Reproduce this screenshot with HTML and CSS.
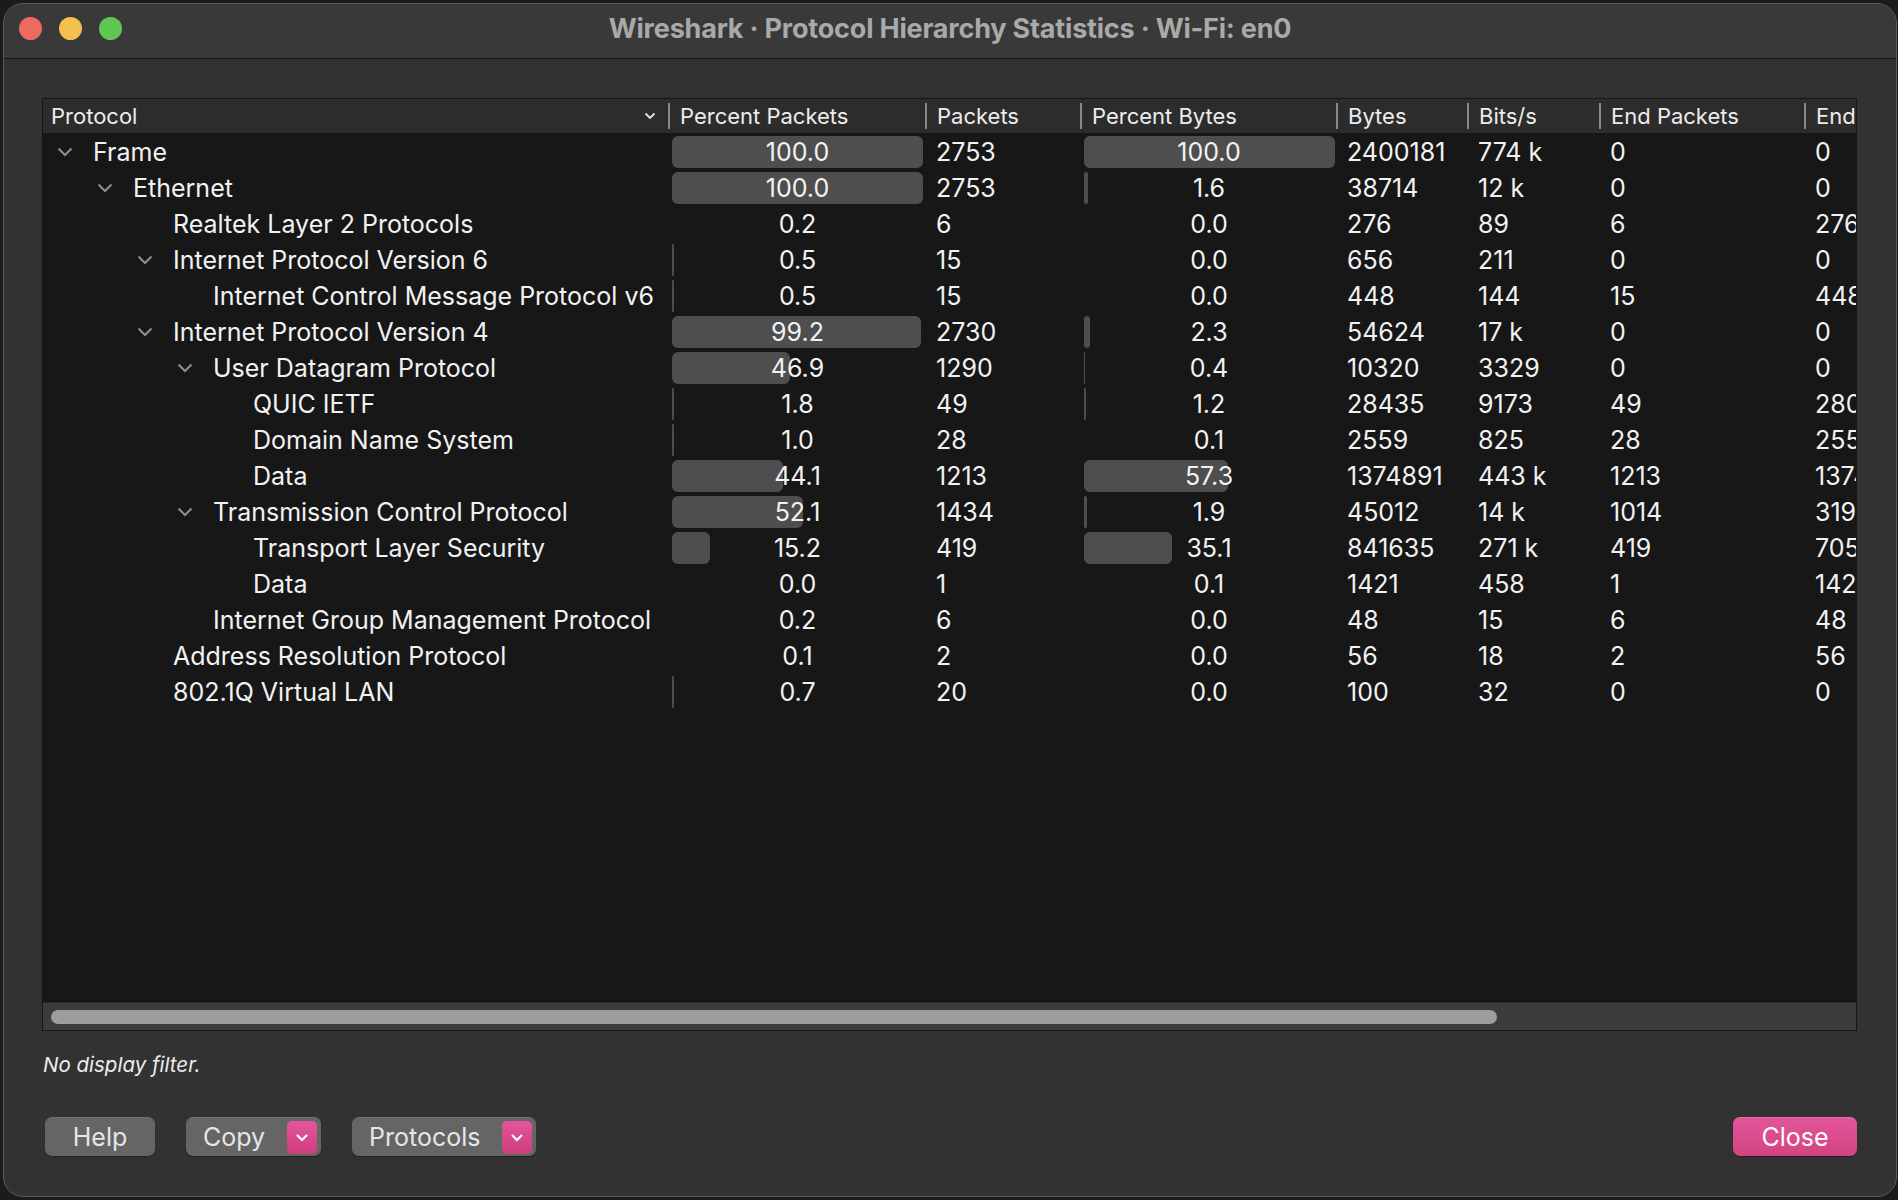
FILE: index.html
```html
<!DOCTYPE html>
<html>
<head>
<meta charset="utf-8">
<link rel="stylesheet" href="styles.css">
</head>
<body>
<div class="window">
  <div class="titlebar">
    <div class="lights">
      <span class="light red"></span>
      <span class="light yellow"></span>
      <span class="light green"></span>
    </div>
    <div class="title">Wireshark · Protocol Hierarchy Statistics · Wi-Fi: en0</div>
    <div></div>
  </div>
  <div class="content">
    <div class="table">
      <div class="clip">
        <div class="row head">
          <div class="hc first"><span>Protocol</span><svg class="sortchev" width="12" height="8" viewBox="0 0 12 8"><polyline points="1.5,1.5 6,6 10.5,1.5" fill="none" stroke="#e8e8e8" stroke-width="1.8"/></svg></div>
          <div class="hc">Percent Packets</div>
          <div class="hc">Packets</div>
          <div class="hc">Percent Bytes</div>
          <div class="hc">Bytes</div>
          <div class="hc">Bits/s</div>
          <div class="hc">End Packets</div>
          <div class="hc">End Bytes</div>
        </div>
        <div class="body">
          <div class="row"><div class="tree l0"><span class="tw"><svg width="16" height="10" viewBox="0 0 16 10"><polyline points="1.5,1.5 8,8 14.5,1.5" fill="none" stroke="#8e8e8e" stroke-width="2"/></svg></span>Frame</div><div class="pct"><i class="bar" style="width:251px"></i><span>100.0</span></div><div class="c">2753</div><div class="pct"><i class="bar" style="width:251px"></i><span>100.0</span></div><div class="c">2400181</div><div class="c">774 k</div><div class="c">0</div><div class="c">0</div></div>
          <div class="row"><div class="tree l1"><span class="tw"><svg width="16" height="10" viewBox="0 0 16 10"><polyline points="1.5,1.5 8,8 14.5,1.5" fill="none" stroke="#8e8e8e" stroke-width="2"/></svg></span>Ethernet</div><div class="pct"><i class="bar" style="width:251px"></i><span>100.0</span></div><div class="c">2753</div><div class="pct"><i class="bar" style="width:4px"></i><span>1.6</span></div><div class="c">38714</div><div class="c">12 k</div><div class="c">0</div><div class="c">0</div></div>
          <div class="row"><div class="tree l2"><span class="tw"></span>Realtek Layer 2 Protocols</div><div class="pct"><span>0.2</span></div><div class="c">6</div><div class="pct"><span>0.0</span></div><div class="c">276</div><div class="c">89</div><div class="c">6</div><div class="c">276</div></div>
          <div class="row"><div class="tree l2"><span class="tw"><svg width="16" height="10" viewBox="0 0 16 10"><polyline points="1.5,1.5 8,8 14.5,1.5" fill="none" stroke="#8e8e8e" stroke-width="2"/></svg></span>Internet Protocol Version 6</div><div class="pct"><i class="bar" style="width:1.5px"></i><span>0.5</span></div><div class="c">15</div><div class="pct"><span>0.0</span></div><div class="c">656</div><div class="c">211</div><div class="c">0</div><div class="c">0</div></div>
          <div class="row"><div class="tree l3"><span class="tw"></span>Internet Control Message Protocol v6</div><div class="pct"><i class="bar" style="width:1.5px"></i><span>0.5</span></div><div class="c">15</div><div class="pct"><span>0.0</span></div><div class="c">448</div><div class="c">144</div><div class="c">15</div><div class="c">448</div></div>
          <div class="row"><div class="tree l2"><span class="tw"><svg width="16" height="10" viewBox="0 0 16 10"><polyline points="1.5,1.5 8,8 14.5,1.5" fill="none" stroke="#8e8e8e" stroke-width="2"/></svg></span>Internet Protocol Version 4</div><div class="pct"><i class="bar" style="width:249px"></i><span>99.2</span></div><div class="c">2730</div><div class="pct"><i class="bar" style="width:6px"></i><span>2.3</span></div><div class="c">54624</div><div class="c">17 k</div><div class="c">0</div><div class="c">0</div></div>
          <div class="row"><div class="tree l3"><span class="tw"><svg width="16" height="10" viewBox="0 0 16 10"><polyline points="1.5,1.5 8,8 14.5,1.5" fill="none" stroke="#8e8e8e" stroke-width="2"/></svg></span>User Datagram Protocol</div><div class="pct"><i class="bar" style="width:118px"></i><span>46.9</span></div><div class="c">1290</div><div class="pct"><i class="bar" style="width:1.2px"></i><span>0.4</span></div><div class="c">10320</div><div class="c">3329</div><div class="c">0</div><div class="c">0</div></div>
          <div class="row"><div class="tree l4"><span class="tw"></span>QUIC IETF</div><div class="pct"><i class="bar" style="width:2px"></i><span>1.8</span></div><div class="c">49</div><div class="pct"><i class="bar" style="width:2px"></i><span>1.2</span></div><div class="c">28435</div><div class="c">9173</div><div class="c">49</div><div class="c">28035</div></div>
          <div class="row"><div class="tree l4"><span class="tw"></span>Domain Name System</div><div class="pct"><i class="bar" style="width:1.5px"></i><span>1.0</span></div><div class="c">28</div><div class="pct"><span>0.1</span></div><div class="c">2559</div><div class="c">825</div><div class="c">28</div><div class="c">2559</div></div>
          <div class="row"><div class="tree l4"><span class="tw"></span>Data</div><div class="pct"><i class="bar" style="width:111px"></i><span>44.1</span></div><div class="c">1213</div><div class="pct"><i class="bar" style="width:144px"></i><span>57.3</span></div><div class="c">1374891</div><div class="c">443 k</div><div class="c">1213</div><div class="c">1374891</div></div>
          <div class="row"><div class="tree l3"><span class="tw"><svg width="16" height="10" viewBox="0 0 16 10"><polyline points="1.5,1.5 8,8 14.5,1.5" fill="none" stroke="#8e8e8e" stroke-width="2"/></svg></span>Transmission Control Protocol</div><div class="pct"><i class="bar" style="width:131px"></i><span>52.1</span></div><div class="c">1434</div><div class="pct"><i class="bar" style="width:2.5px"></i><span>1.9</span></div><div class="c">45012</div><div class="c">14 k</div><div class="c">1014</div><div class="c">31942</div></div>
          <div class="row"><div class="tree l4"><span class="tw"></span>Transport Layer Security</div><div class="pct"><i class="bar" style="width:38px"></i><span>15.2</span></div><div class="c">419</div><div class="pct"><i class="bar" style="width:88px"></i><span>35.1</span></div><div class="c">841635</div><div class="c">271 k</div><div class="c">419</div><div class="c">705217</div></div>
          <div class="row"><div class="tree l4"><span class="tw"></span>Data</div><div class="pct"><span>0.0</span></div><div class="c">1</div><div class="pct"><span>0.1</span></div><div class="c">1421</div><div class="c">458</div><div class="c">1</div><div class="c">1421</div></div>
          <div class="row"><div class="tree l3"><span class="tw"></span>Internet Group Management Protocol</div><div class="pct"><span>0.2</span></div><div class="c">6</div><div class="pct"><span>0.0</span></div><div class="c">48</div><div class="c">15</div><div class="c">6</div><div class="c">48</div></div>
          <div class="row"><div class="tree l2"><span class="tw"></span>Address Resolution Protocol</div><div class="pct"><span>0.1</span></div><div class="c">2</div><div class="pct"><span>0.0</span></div><div class="c">56</div><div class="c">18</div><div class="c">2</div><div class="c">56</div></div>
          <div class="row"><div class="tree l2"><span class="tw"></span>802.1Q Virtual LAN</div><div class="pct"><i class="bar" style="width:1.5px"></i><span>0.7</span></div><div class="c">20</div><div class="pct"><span>0.0</span></div><div class="c">100</div><div class="c">32</div><div class="c">0</div><div class="c">0</div></div>
        </div>
      </div>
      <div class="hscroll"><div class="thumb"></div></div>
    </div>
    <div class="filter">No display filter.</div>
    <div class="buttons">
      <button class="btn help">Help</button>
      <button class="btn drop copy">Copy<span class="pink"><svg width="14" height="9" viewBox="0 0 14 9"><polyline points="2,2 7,7 12,2" fill="none" stroke="#fff" stroke-width="2.2"/></svg></span></button>
      <button class="btn drop protos">Protocols<span class="pink"><svg width="14" height="9" viewBox="0 0 14 9"><polyline points="2,2 7,7 12,2" fill="none" stroke="#fff" stroke-width="2.2"/></svg></span></button>
      <div class="spacer"></div>
      <button class="btn close">Close</button>
    </div>
  </div>
</div>
</body>
</html>
```

FILE: styles.css
```css
* { box-sizing: border-box; }
html, body { margin: 0; padding: 0; }
body {
  background: #1b1b1b;
  width: 1898px;
  height: 1200px;
  overflow: hidden;
  font-family: Inter, "Open Sans", sans-serif;
  color: #f2f2f2;
}
.window {
  margin: 3px 1px 0 3px;
  height: 1194px;
  border: 1px solid #5b5b5b;
  border-radius: 20px;
  background: #323232;
  display: flex;
  flex-direction: column;
  overflow: hidden;
}
.titlebar {
  height: 55px;
  flex: none;
  background: #393939;
  border-bottom: 1px solid #141414;
  display: grid;
  grid-template-columns: 1fr auto 1fr;
  align-items: center;
  padding-bottom: 5px;
}
.lights {
  display: flex;
  gap: 17px;
  padding-left: 15px;
}
.light {
  width: 23px;
  height: 23px;
  border-radius: 50%;
  display: block;
}
.red { background: #ed6a5e; }
.yellow { background: #f4bf4f; }
.green { background: #61c554; }
.title {
  font-size: 27px;
  font-weight: 700;
  color: #a9a9a9;
  letter-spacing: -0.2px;
}
.content {
  flex: 1;
  padding: 39px 39px 0 38px;
  display: flex;
  flex-direction: column;
}
.table {
  height: 933px;
  border: 1px solid #151515;
  background: #171717;
  display: flex;
  flex-direction: column;
}
.clip {
  flex: 1;
  overflow: hidden;
  display: flex;
  flex-direction: column;
}
.row {
  display: grid;
  grid-template-columns: 625px 257px 155px 256px 131px 132px 205px 220px;
  height: 36px;
  align-items: center;
  font-size: 25px;
  white-space: nowrap;
  padding-top: 1px;
}
.head {
  height: 34px;
  background: #2c2c2c;
  font-size: 22px;
  color: #ececec;
  padding-top: 0;
}
.hc {
  height: 100%;
  display: flex;
  align-items: center;
  padding-left: 10px;
  padding-bottom: 1px;
  border-left: 2px solid #8a8a8a;
  border-image: linear-gradient(to bottom, transparent 5px, #8a8a8a 5px, #8a8a8a 29px, transparent 29px) 1;
}
.hc.first {
  border-left: none;
  border-image: none;
  padding-left: 8px;
  padding-right: 12px;
  justify-content: space-between;
}
.sortchev { flex: none; }
.body {
  flex: 1;
}
.tree {
  display: flex;
  align-items: center;
  height: 100%;
}
.tw {
  width: 36px;
  flex: none;
  display: flex;
  align-items: center;
}
.l0 { padding-left: 14px; }
.l1 { padding-left: 54px; }
.l2 { padding-left: 94px; }
.l3 { padding-left: 134px; }
.l4 { padding-left: 174px; }
.pct {
  display: grid;
  height: 100%;
  align-items: center;
}
.pct > * { grid-area: 1 / 1; }
.bar {
  justify-self: start;
  margin-left: 4px;
  height: 32px;
  border-radius: 6px;
  background: #4e4e4e;
}
.pct > span {
  justify-self: center;
  padding-left: 2px;
}
.c {
  padding-left: 11px;
}
.hscroll {
  height: 28px;
  flex: none;
  background: #3c3c3c;
  border-top: 1px solid #2a2a2a;
  padding: 7px 0 0 8px;
}
.thumb {
  width: 1446px;
  height: 14px;
  border-radius: 7px;
  background: #9d9d9d;
}
.filter {
  margin-top: 21px;
  font-size: 20.5px;
  font-style: italic;
  color: #ececec;
  height: 26px;
  line-height: 26px;
  padding-left: 1px;
}
.buttons {
  margin-top: 39px;
  display: flex;
  align-items: center;
  gap: 31px;
  padding-left: 3px;
}
.spacer { flex: 1; }
.btn {
  font-family: Inter, "Open Sans", sans-serif;
  font-size: 25px;
  color: #e6e6e6;
  background: #656565;
  border: none;
  border-top: 1px solid #727272;
  border-radius: 7px;
  height: 39px;
  padding: 0;
  display: flex;
  align-items: center;
  box-shadow: 0 1px 1px rgba(0,0,0,0.35);
}
.help { width: 110px; justify-content: center; }
.drop { justify-content: space-between; padding-left: 17px; padding-right: 4px; }
.copy { width: 135px; }
.protos { width: 184px; }
.pink {
  width: 30px;
  height: 33px;
  border-radius: 5px;
  background: linear-gradient(#e4559c, #cc3e7b);
  display: flex;
  align-items: center;
  justify-content: center;
}
.close {
  width: 124px;
  justify-content: center;
  color: #ffffff;
  background: linear-gradient(#e3559a, #d2437f);
  border-top: 1px solid #ea6aa8;
}
```
